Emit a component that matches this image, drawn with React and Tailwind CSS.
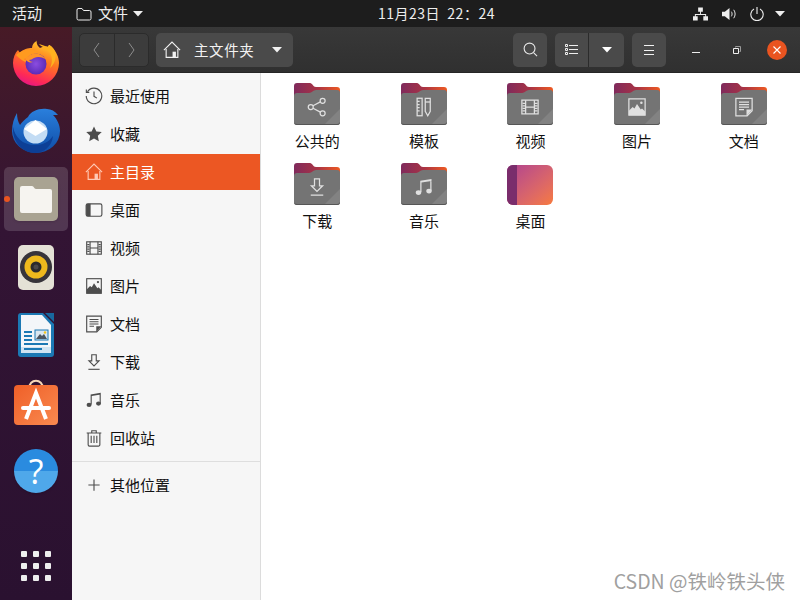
import React from 'react';

const glyphs = {
  clock: (
    <g fill="none" stroke="currentColor" strokeWidth="1">
      <path d="M2.200 4.200A6.900 6.900 0 1 1 1.100 8" />
      <path d="M1.200 2.200v2.600h2.600" />
      <path d="M8 4v4.300l2.600 1.600" />
    </g>
  ),
  star: <path fill="currentColor" d="M8 1.300l2.100 4.400 4.800.6-3.500 3.300.9 4.800L8 11.900l-4.300 2.500.9-4.800L1.100 6.300l4.800-.6z" />,
  home: (
    <g fill="none" stroke="currentColor" strokeWidth="1">
      <path d="M.8 8.200L8 1l7.200 7.200" />
      <path d="M2.800 7v7.500h10.400V7" />
      <path d="M8.500 14.500V9.500h3v5" fill="currentColor" stroke="none" />
    </g>
  ),
  desktop: (
    <g>
      <rect x="1" y="2.500" width="14" height="11" rx="1.500" fill="none" stroke="currentColor" />
      <path fill="currentColor" d="M1 4a1.500 1.500 0 0 1 1.500-1.500H5v11H2.500A1.500 1.500 0 0 1 1 12z" />
    </g>
  ),
  film: (
    <g fill="none" stroke="currentColor" strokeWidth="1">
      <rect x="1.500" y="2.500" width="13" height="11" />
      <path d="M4.500 2.500v11M11.500 2.500v11M4.500 8h7" />
      <path d="M2 5h2M2 7h2M2 9h2M2 11h2M12 5h2M12 7h2M12 9h2M12 11h2" />
    </g>
  ),
  image: (
    <g>
      <rect x="1.500" y="1.500" width="13" height="13" fill="none" stroke="currentColor" />
      <path fill="currentColor" d="M1.500 11l3-3 1.500 1.200L8 5.500l3 4.500 1-.8 2.500 2.300v3h-13z" />
      <circle cx="11.500" cy="4.500" r="1" fill="currentColor" />
    </g>
  ),
  doc: (
    <g>
      <path fill="none" stroke="currentColor" d="M1.500 1h13v10l-4 4h-9z" />
      <path fill="currentColor" d="M10 15v-5h4.500z" />
      <path stroke="currentColor" d="M4 4h8M4 6h8M4 8h8M4 10h4" />
    </g>
  ),
  download: (
    <g fill="none" stroke="currentColor" strokeWidth="1">
      <path d="M6 1.500h4v5.500h2.500L8 11.500 3.500 7H6z" />
      <path d="M3 14.500h10" />
    </g>
  ),
  music: (
    <g fill="currentColor">
      <path d="M5 3l9-1.500v1.600L6 4.400V12H5zM13 2h1v9h-1z" />
      <ellipse cx="3.600" cy="12.400" rx="2.200" ry="1.900" />
      <ellipse cx="12" cy="11.200" rx="2.200" ry="1.900" />
    </g>
  ),
  trash: (
    <g fill="none" stroke="currentColor" strokeWidth="1">
      <path d="M1.500 3.500h13M6 3V1.500h4V3" />
      <path d="M2.800 3.500v10.500a1.200 1.200 0 0 0 1.200 1.200h8a1.200 1.200 0 0 0 1.200-1.200V3.500" />
      <path d="M5.500 6v6.500M8 6v6.500M10.500 6v6.500" />
    </g>
  ),
  plus: <path stroke="currentColor" fill="none" d="M8 3v10M3 8h10" />,
  share: (
    <g fill="none" stroke="currentColor" strokeWidth="1">
      <circle cx="3" cy="8" r="2" />
      <circle cx="12.500" cy="3" r="2" />
      <circle cx="12.500" cy="13" r="2" />
      <path d="M4.800 7l5.900-3.100M4.800 9l5.900 3.100" />
    </g>
  ),
  template: (
    <g fill="none" stroke="currentColor" strokeWidth="1">
      <rect x="2.500" y="1" width="4" height="14" />
      <path d="M2.500 3.500h2M2.500 6h2M2.500 8.500h2M2.500 11h2" />
      <path d="M9 1h4v10.500l-2 3.500-2-3.500z" />
      <path d="M9 4h4" />
    </g>
  ),
};

function Glyph({ name, className }) {
  return (
    <svg viewBox="0 0 16 16" className={className}>
      {glyphs[name]}
    </svg>
  );
}

function Caret({ className }) {
  return (
    <svg viewBox="0 0 10 6" className={className}>
      <path fill="currentColor" d="M0 0h10L5 5.500z" />
    </svg>
  );
}

function Folder({ glyph, id }) {
  return (
    <svg viewBox="0 0 46 42" className="w-[46px] h-[42px]">
      <defs>
        <linearGradient id={id} x1="0" y1="0" x2="1" y2="0">
          <stop offset="0" stopColor="#7f2a5c" />
          <stop offset="0.5" stopColor="#a83345" />
          <stop offset="1" stopColor="#ee5a22" />
        </linearGradient>
      </defs>
      <path fill={`url(#${id})`} d="M3 0h13c2.500 0 3 4 6 4h21a3 3 0 0 1 3 3v14H0V3a3 3 0 0 1 3-3z" />
      <path fill="#747474" d="M3 10h12c3 0 4-3 7-3h21a3 3 0 0 1 3 3v29a3 3 0 0 1-3 3H3a3 3 0 0 1-3-3V13a3 3 0 0 1 3-3z" />
      <path fill="#828282" d="M46 26v13a3 3 0 0 1-3 3H30z" />
      <path fill="#565656" d="M0 39a3 3 0 0 0 3 3h40a3 3 0 0 0 3-3 3 3 0 0 1-3 2H3a3 3 0 0 1-3-2z" />
      <svg x="13" y="14" width="20" height="20" viewBox="0 0 16 16" className="text-[#e0e0e0]">
        {glyphs[glyph]}
      </svg>
    </svg>
  );
}

function DesktopFolder() {
  return (
    <div className="w-[46px] h-[40px] rounded-[6px] overflow-hidden flex bg-gradient-to-br from-[#b0408f] to-[#f77a3c]">
      <div className="w-[10px] h-full bg-[#7a2d6c]" />
    </div>
  );
}

function Firefox() {
  return (
    <svg viewBox="0 0 48 48" className="w-12 h-12">
      <defs>
        <linearGradient id="ffOuter" x1="0.7" y1="0" x2="0.3" y2="1">
          <stop offset="0" stopColor="#ffd52e" />
          <stop offset="0.4" stopColor="#ff7a1f" />
          <stop offset="0.8" stopColor="#ff2a55" />
          <stop offset="1" stopColor="#e31587" />
        </linearGradient>
        <radialGradient id="ffGlobe">
          <stop offset="0" stopColor="#8b4de0" />
          <stop offset="1" stopColor="#5b2bb8" />
        </radialGradient>
      </defs>
      <path fill="url(#ffOuter)" d="M25 1c-1 4 1 6 3 8 2-1 5-2 8-1 1-3 1-2 3-1 5 5 8 11 8 17a23 23 0 0 1-46 0c0-5 2-10 5-13l2 3c3-4 8-5 12-5 0-3 2-6 5-7z" />
      <path fill="#ffb21f" d="M27 5c2 3 8 4 11 9 3 5 2 11 0 15 4-3 7-10 5-16-1-4-4-6-6-7 0 2-2 2-4 1-3-1-5-2-6-2z" />
      <path fill="#ff9a1f" d="M4 16c5-5 13-7 20-4 5 2 8 7 8 7l-8-2c-4 1-8 2-12 3 3 2 7 2 7 2-3 3-8 1-15-6z" />
      <circle cx="24" cy="25" r="10.500" fill="url(#ffGlobe)" />
      <path fill="#ff9427" d="M13 20c4-4 9-7 14-5 3 1 5 3 6 5-3-2-7-3-11-1-2 1-3 2-5 2 1 1 2 2 4 2-3 1-6 0-8-3z" />
    </svg>
  );
}

function Thunderbird() {
  return (
    <svg viewBox="0 0 48 48" className="w-12 h-12">
      <defs>
        <linearGradient id="tbBody" x1="0" y1="0" x2="0" y2="1">
          <stop offset="0" stopColor="#2a7fdc" />
          <stop offset="1" stopColor="#0f4da8" />
        </linearGradient>
      </defs>
      <path fill="url(#tbBody)" d="M16 10c3-6 11-9 19-8 4 0 8 2 11 6l-5 0c4 4 7 10 7 16a24 22 0 0 1-48 0c0-7 2-13 5-18 0 5 1 9 3 12 2-3 5-6 8-8z" />
      <path fill="#0d3f96" d="M1 20c2 10 9 18 22 18 8 0 14-3 18-9-1 10-9 17-18 17C11 46 0 35 1 20z" />
      <ellipse cx="23.500" cy="25" rx="12" ry="11.500" fill="#c3dcf4" />
      <path fill="#ffffff" d="M12 22l11.500-9L35 22l-11.500 7z" />
    </svg>
  );
}

function Files() {
  return (
    <div className="w-[44px] h-[44px] rounded-[5px] bg-[#a9a392] flex items-center justify-center shadow-sm">
      <svg viewBox="0 0 32 28" className="w-8 h-7">
        <path fill="#f6f4f0" d="M2 1h10c2 0 2 3 4 3h14a2 2 0 0 1 2 2v20a2 2 0 0 1-2 2H2a2 2 0 0 1-2-2V3a2 2 0 0 1 2-2z" />
      </svg>
    </div>
  );
}

function Rhythmbox() {
  return (
    <div className="w-[36px] h-[45px] rounded-[5px] bg-[#e4e1d6] flex items-center justify-center">
      <svg viewBox="0 0 32 32" className="w-8 h-8">
        <circle cx="16" cy="16" r="16" fill="#37343a" />
        <circle cx="16" cy="16" r="11.500" fill="#eeb91d" />
        <circle cx="16" cy="16" r="5.500" fill="#2b2a2c" />
        <circle cx="16" cy="16" r="2.500" fill="#4a484a" />
      </svg>
    </div>
  );
}

function Writer() {
  return (
    <svg viewBox="0 0 36 44" className="w-[36px] h-[44px]">
      <path fill="#18689f" d="M27 0h9v9z" />
      <path fill="#1b79b4" d="M3 0h22l11 11v30a3 3 0 0 1-3 3H3a3 3 0 0 1-3-3V3a3 3 0 0 1 3-3z" />
      <path fill="#f3f6f9" d="M3 2h21l9 10v28H3z" />
      <path fill="#cfe4f2" d="M3 34h30v6H3z" />
      <path fill="#1b79b4" d="M6 18h8v2H6zM6 22h8v2H6zM6 26h8v2H6zM6 30h24v2H6zM6 35h18v2H6z" />
      <rect x="17" y="17" width="13" height="10" fill="#dbe7f0" stroke="#1b79b4" />
      <path fill="#4b5560" d="M18 26l4-5 2 2 2-2 3 5z" />
      <circle cx="27" cy="19.500" r="1.200" fill="#f5c518" />
    </svg>
  );
}

function AppStore() {
  return (
    <svg viewBox="0 0 44 48" className="w-[44px] h-[48px]">
      <defs>
        <linearGradient id="asBag" x1="0" y1="0" x2="1" y2="1">
          <stop offset="0" stopColor="#ef5f28" />
          <stop offset="1" stopColor="#f98a50" />
        </linearGradient>
      </defs>
      <path fill="none" stroke="#f6d7b8" strokeWidth="2" d="M15 10c0-11 14-11 14 0" />
      <rect y="6" width="44" height="40" rx="4" fill="url(#asBag)" />
      <path fill="none" stroke="#fff" strokeWidth="4" d="M12 40L22 14l10 26" />
      <path stroke="#fff" strokeWidth="4" strokeLinecap="round" d="M9 29h26" />
    </svg>
  );
}

function Help() {
  return (
    <div className="w-[44px] h-[44px] rounded-full flex items-center justify-center bg-gradient-to-b from-[#2a8bdf] from-50% to-[#4fa8ea] to-50% shadow-sm">
      <span className="text-white text-[34px] leading-[44px] font-['Open_Sans']">?</span>
    </div>
  );
}

function DockTile({ active, children }) {
  return (
    <div className={`relative h-16 w-16 rounded-[5px] flex items-center justify-center ${active ? 'bg-white/15' : ''}`}>
      {active && <span className="absolute left-0 top-[29px] w-[6px] h-[6px] rounded-full bg-[#e95420]" />}
      {children}
    </div>
  );
}

function Dock() {
  return (
    <div className="w-[72px] shrink-0 flex flex-col items-center pt-1 pb-[19px] gap-1 bg-gradient-to-b from-[#471a26] via-[#331434] via-35% to-[#2a1130]">
      <DockTile><Firefox /></DockTile>
      <DockTile><Thunderbird /></DockTile>
      <DockTile active><Files /></DockTile>
      <DockTile><Rhythmbox /></DockTile>
      <DockTile><Writer /></DockTile>
      <DockTile><AppStore /></DockTile>
      <DockTile><Help /></DockTile>
      <div className="mt-auto grid grid-cols-3 gap-[6px]">
        {Array.from({ length: 9 }).map((_, i) => (
          <span key={i} className="w-[6px] h-[6px] rounded-[1px] bg-[#eeeeee]" />
        ))}
      </div>
    </div>
  );
}

function TopBar() {
  return (
    <div className="h-[27px] shrink-0 bg-[#1d1d1d] text-[#eeeeee] text-[15px] flex items-center relative">
      <span className="ml-3 w-[64px]">活动</span>
      <svg viewBox="0 0 16 14" className="w-4 h-[14px]" fill="none" stroke="currentColor">
        <path d="M2 1.500h4l1.500 2h6a1.500 1.500 0 0 1 1.500 1.500v6.500a1.500 1.500 0 0 1-1.500 1.500h-11a1.500 1.500 0 0 1-1.500-1.500V3a1.500 1.500 0 0 1 1.500-1.500z" />
      </svg>
      <span className="ml-[6px]">文件</span>
      <Caret className="ml-[5px] w-[10px] h-[6px]" />
      <span className="absolute left-[378px] text-[14px] tracking-[0.5px]">11月23日&nbsp;&nbsp;22：24</span>
      <div className="ml-auto flex items-center mr-[15px]">
        <svg viewBox="0 0 16 14" className="w-[15px] h-[14px]" fill="currentColor">
          <path d="M5.500 0h5v4.500h-5zM7.500 4.500h1V7h5.500v2.500h-1V8H3v1.500H2V7h5.500zM0 9.500h5V14H0zM11 9.500h5V14h-5z" />
        </svg>
        <svg viewBox="0 0 16 14" className="ml-[14px] w-[15px] h-[14px]" fill="none" stroke="currentColor">
          <path fill="currentColor" stroke="none" d="M0 4.500h3L8 .5v13l-5-4H0z" />
          <path d="M10 4.500c1 1.500 1 3.500 0 5M12.500 2.500c2 3 2 6 0 9" />
        </svg>
        <svg viewBox="0 0 14 14" className="ml-[13px] w-[14px] h-[14px]" fill="none" stroke="currentColor" strokeWidth="1.100">
          <path d="M4 2a6.200 6.200 0 1 0 6 0M7 0v7" />
        </svg>
        <Caret className="ml-[11px] w-[10px] h-[6px]" />
      </div>
    </div>
  );
}

function HeaderBar() {
  return (
    <div className="h-[46px] shrink-0 bg-gradient-to-b from-[#383838] to-[#303030] flex items-center pl-[7px] text-white border-b border-[#262626]">
      <div className="h-[34px] w-[70px] flex rounded-[5px] border border-[#2b2b2b] bg-[#3c3c3c] text-[#8c8c8c]">
        <div className="flex-1 flex items-center justify-center border-r border-[#2b2b2b] pr-[2px]">
          <svg viewBox="0 0 8 16" className="w-2 h-4" fill="none" stroke="currentColor"><path d="M7 1L2 8l5 7" /></svg>
        </div>
        <div className="flex-1 flex items-center justify-center pl-[1px]">
          <svg viewBox="0 0 8 16" className="w-2 h-4" fill="none" stroke="currentColor"><path d="M1 1l5 7-5 7" /></svg>
        </div>
      </div>
      <div className="ml-[7px] h-[34px] w-[137px] rounded-[5px] bg-[#4a4a4a] flex items-center pl-[7px] text-[14.500px] text-[#f2f2f2]">
        <Glyph name="home" className="w-[18px] h-[18px]" />
        <span className="ml-[13px] tracking-[0.6px]">主文件夹</span>
        <Caret className="ml-auto mr-[11px] w-[10px] h-[6px]" />
      </div>
      <div className="ml-[220px] h-[34px] w-[34px] rounded-[5px] bg-[#4a4a4a] flex items-center justify-center">
        <svg viewBox="0 0 16 16" className="w-[15px] h-[15px]" fill="none" stroke="#e6e6e6" strokeWidth="1.200">
          <circle cx="7" cy="7" r="5.800" />
          <path d="M11.500 11.500L15 15" />
        </svg>
      </div>
      <div className="ml-2 h-[34px] w-[69px] rounded-[5px] bg-[#4a4a4a] flex">
        <div className="w-[34px] flex items-center justify-center border-r border-[#2b2b2b]">
          <svg viewBox="0 0 13 12" className="w-[13px] h-3" fill="none" stroke="#eeeeee">
            <path d="M.5.500h2v2h-2zM.5 4.500h2v2h-2zM.5 8.500h2v2h-2zM4 1.500h9M4 5.500h9M4 9.500h9" />
          </svg>
        </div>
        <div className="flex-1 flex items-center justify-center">
          <Caret className="w-[10px] h-[6px]" />
        </div>
      </div>
      <div className="ml-2 h-[34px] w-[34px] rounded-[5px] bg-[#4a4a4a] flex items-center justify-center">
        <svg viewBox="0 0 10 10" className="w-[10px] h-[10px]" fill="none" stroke="#f2f2f2">
          <path d="M0 .5h10M0 5.500h10M0 9.500h10" />
        </svg>
      </div>
      <span className="ml-[26px] mt-[5px] w-2 h-px bg-[#eeeeee]" />
      <svg viewBox="0 0 8 8" className="ml-[33px] w-2 h-2" fill="none" stroke="#eeeeee">
        <path d="M.5 2.500h5v5h-5z" />
        <path d="M2.500 1.500v-1h5v5h-1" stroke="#9a9a9a" />
      </svg>
      <div className="ml-[26px] w-5 h-5 rounded-full bg-[#e95420] flex items-center justify-center">
        <svg viewBox="0 0 8 8" className="w-2 h-2" fill="none" stroke="#ffffff" strokeWidth="1.100">
          <path d="M.5.500l7 7M7.500.500l-7 7" />
        </svg>
      </div>
    </div>
  );
}

const places = [
  { name: '最近使用', icon: 'clock' },
  { name: '收藏', icon: 'star' },
  { name: '主目录', icon: 'home', active: true },
  { name: '桌面', icon: 'desktop' },
  { name: '视频', icon: 'film' },
  { name: '图片', icon: 'image' },
  { name: '文档', icon: 'doc' },
  { name: '下载', icon: 'download' },
  { name: '音乐', icon: 'music' },
  { name: '回收站', icon: 'trash' },
];

function PlaceRow({ name, icon, active }) {
  return (
    <div className={`h-[36px] flex items-center pl-[13px] gap-[7px] text-[15px] ${active ? 'bg-[#ec5723] text-white' : 'text-[#111111]'}`}>
      <Glyph name={icon} className={`w-[18px] h-[18px] ${active ? 'text-[#ffc9b5]' : 'text-[#4d4d4d]'}`} />
      <span>{name}</span>
    </div>
  );
}

function Sidebar() {
  return (
    <div className="w-[189px] shrink-0 bg-[#f6f6f6] border-r border-[#dcdcdc] pt-[5px] flex flex-col">
      <div className="flex flex-col gap-[2px]">
        {places.map((p) => (
          <PlaceRow key={p.name} {...p} />
        ))}
      </div>
      <div className="mt-[5px] h-px bg-[#dedede]" />
      <div className="mt-[5px]">
        <PlaceRow name="其他位置" icon="plus" />
      </div>
    </div>
  );
}

const files = [
  { name: '公共的', glyph: 'share' },
  { name: '模板', glyph: 'template' },
  { name: '视频', glyph: 'film' },
  { name: '图片', glyph: 'image' },
  { name: '文档', glyph: 'doc' },
  { name: '下载', glyph: 'download' },
  { name: '音乐', glyph: 'music' },
  { name: '桌面', desktop: true },
];

function FileGrid() {
  return (
    <div className="flex-1 bg-white px-[3px] pt-[10px] relative">
      <div className="grid grid-cols-5 gap-y-[12px]">
        {files.map((f, i) => (
          <div key={f.name} className="flex flex-col items-center">
            <div className="h-[42px] flex items-end">
              {f.desktop ? <DesktopFolder /> : <Folder glyph={f.glyph} id={`folderTab${i}`} />}
            </div>
            <span className="mt-[6px] h-5 leading-5 text-[15px] text-[#111111]">{f.name}</span>
          </div>
        ))}
      </div>
      <span className="absolute right-[15px] bottom-[7px] text-[19.500px] leading-6 text-[#a0a0a0]">CSDN @铁岭铁头侠</span>
    </div>
  );
}

export default function App() {
  return (
    <div className="w-[800px] h-[600px] flex flex-col overflow-hidden font-['Noto_Sans_CJK_SC','Noto_Sans',sans-serif]">
      <TopBar />
      <div className="flex-1 flex min-h-0">
        <Dock />
        <div className="flex-1 flex flex-col min-w-0">
          <HeaderBar />
          <div className="flex-1 flex min-h-0">
            <Sidebar />
            <FileGrid />
          </div>
        </div>
      </div>
    </div>
  );
}
